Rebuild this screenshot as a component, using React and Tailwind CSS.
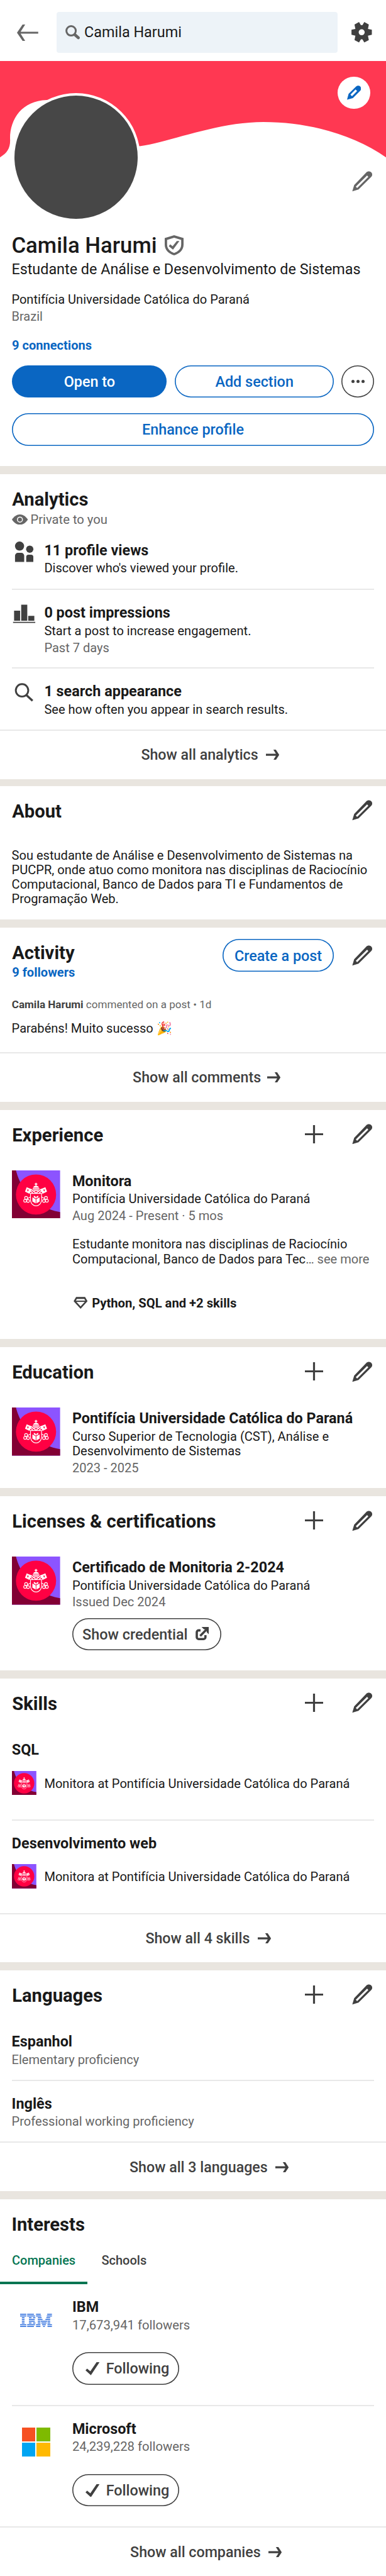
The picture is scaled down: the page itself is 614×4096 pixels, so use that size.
import React from "react";

const T16 = "block text-[23.4px] leading-[28px] whitespace-nowrap";
const T14 = "block text-[20.07px] leading-[24px] whitespace-nowrap";

function Pencil({ className = "text-[#404040]" }) {
  return (
    <svg viewBox="0 0 174 174" className={`h-[32.6px] w-[32.6px] shrink-0 ${className}`} fill="currentColor" fillRule="evenodd">
      <path d="M2 172L18 119L122 11C132 0 152 0 163 11C174 22 174 39 163 50L55 156ZM128 37L32 132L43 144L138 49Z" />
    </svg>
  );
}

function SmallPencil() {
  return (
    <svg viewBox="0 0 100 100" className="h-[22.6px] w-[22.6px] text-[#0a66c2]" fill="currentColor" fillRule="evenodd">
      <path d="M0 100L11 59L64 7C73 -2 86 -1 93 7C101 15 101 28 93 36L41 88ZM60 28L24 64L35 75L71 39Z" />
    </svg>
  );
}

function Plus() {
  return (
    <svg viewBox="0 0 29 29" className="h-[29px] w-[29px] shrink-0 text-[#404040]" fill="currentColor">
      <path d="M12.9 0H16.1V12.9H29V16.1H16.1V29H12.9V16.1H0V12.9H12.9Z" />
    </svg>
  );
}

function ArrowRight() {
  return (
    <svg viewBox="0 0 21.2 16.4" className="h-[16.4px] w-[21.2px] shrink-0" fill="currentColor">
      <path d="M11.8 0H15.8L21.2 8.2L15.8 16.4H11.8L15.9 9.8H0V6.6H15.9Z" />
    </svg>
  );
}

function Check() {
  return (
    <svg viewBox="0 0 22.4 20.8" className="h-[20.8px] w-[22.4px] shrink-0" fill="currentColor">
      <path d="M0 13L2.6 10.2L7.7 14.6L17.6 0H22.4L8.6 20.8Z" />
    </svg>
  );
}

function Crest({ className }) {
  const half = (
    <g>
      <path d="M124 141L166 158L148 197L110 179Z" fill="#fff" />
      <path d="M137 158L131 176M126 163L142 170" stroke="#ff0043" strokeWidth="5" />
      <path d="M158 158L204 192M154 172L176 190" stroke="#fff" strokeWidth="8" />
      <g fill="none" stroke="#fff" strokeWidth="6">
        <circle cx="119" cy="231" r="12" />
        <circle cx="111" cy="255" r="12" />
        <circle cx="136" cy="257" r="12" />
        <path d="M130 238L157 222" />
      </g>
      <path d="M172 226L200 242V278L172 262Z M184 212L201 222V236L184 226Z" fill="#fff" />
    </g>
  );
  return (
    <svg viewBox="0 0 405 405" className={`shrink-0 ${className}`}>
      <rect width="405" height="405" fill="#8c54ff" />
      <path d="M0 0H34C60 110 160 310 405 350V405H0Z" fill="#820034" />
      <circle cx="202.5" cy="203" r="169" fill="#ff0043" />
      {half}
      <g transform="matrix(-1 0 0 1 405 0)">{half}</g>
      <path d="M202.5 105V132M191 115H214" stroke="#fff" strokeWidth="8" />
      <path d="M188 131H217L229 146H176Z M174 151H231V161H174Z M184 166H221L228 174H177Z" fill="#fff" />
      <path d="M156 194H249V245C249 282 222 298 202.5 298C183 298 156 282 156 245Z" fill="none" stroke="#fff" strokeWidth="6" />
    </svg>
  );
}

const IBM_ROWS = [
  [[0, 194], [222, 433], [500, 648], [852, 1000]],
  [[0, 194], [222, 468], [500, 662], [838, 1000]],
  [[55, 139], [277, 361], [405, 480], [555, 676], [824, 945]],
  [[55, 139], [277, 460], [555, 705], [795, 945]],
  [[55, 139], [277, 460], [555, 639], [652, 848], [861, 945]],
  [[55, 139], [277, 361], [405, 480], [555, 639], [668, 832], [861, 945]],
  [[0, 194], [222, 468], [500, 639], [692, 808], [861, 1000]],
  [[0, 194], [222, 433], [500, 639], [722, 778], [861, 1000]],
];

function IbmLogo() {
  return (
    <svg viewBox="0 0 1000 415" className="h-[21px] w-[50.6px]" fill="#2a6bdc">
      {IBM_ROWS.map((row, i) => row.map(([a, b]) => <rect key={`${i}-${a}`} x={a} y={i * 55} width={b - a} height="30" />))}
    </svg>
  );
}

function MicrosoftLogo() {
  return (
    <span className="grid h-[46.2px] w-[45.8px] grid-cols-2 gap-[2px]">
      <span className="bg-[#f65022]" />
      <span className="bg-[#7eba00]" />
      <span className="bg-[#00a5f2]" />
      <span className="bg-[#ffb901]" />
    </span>
  );
}

function Band({ className = "h-[13px]" }) {
  return <div className={`shrink-0 bg-[#e9e5df] ${className}`} />;
}

function Divider({ className = "" }) {
  return <div className={`h-[2px] shrink-0 bg-[#e8e8e8] ${className}`} />;
}

function SectionHeader({ title, add }) {
  return (
    <header className="flex h-[77px] shrink-0 items-center pr-[21.8px] pl-[19.2px]">
      <h2 className="mt-[3px] flex-1 text-[29.2px] leading-[34px] font-bold">{title}</h2>
      {add && <Plus />}
      <span className="ml-[46px] flex"><Pencil /></span>
    </header>
  );
}

function ShowAll({ label, className }) {
  return (
    <a className="mt-auto block shrink-0 text-[#404040]">
      <Divider />
      <span className={`flex h-[76.6px] items-center ${className}`}>
        <span className="text-[23.22px] leading-[28px] font-medium whitespace-nowrap">{label}</span>
        <ArrowRight />
      </span>
    </a>
  );
}

function PillButton({ children, className }) {
  return <button className={`flex h-[51.8px] shrink-0 items-center rounded-full text-[23.4px] leading-[28px] font-medium whitespace-nowrap ${className}`}>{children}</button>;
}

const BLUE_OUTLINE = "text-[#0a66c2] shadow-[inset_0_0_0_1.6px_#0a66c2]";
const DARK_OUTLINE = "text-[#404040] shadow-[inset_0_0_0_1.6px_#404040]";

function TopBar() {
  return (
    <div className="flex h-[96.5px] shrink-0 items-start pt-[19.2px] pl-[27.4px]">
      <svg viewBox="0 0 33.8 26" className="mt-[19.4px] h-[26px] w-[33.8px] text-[#666]" fill="currentColor">
        <path d="M8.9 0H13.1L5.8 11.4H33.8V14.6H5.8L13.1 26H8.9L0 13Z" />
      </svg>
      <div className="ml-[28.5px] flex h-[64.4px] w-[447.6px] items-center rounded-[4px] bg-[#edf3f8] pl-[14.4px]">
        <svg viewBox="0 0 23.4 23" className="h-[23px] w-[23.4px] text-[#666]">
          <circle cx="9.1" cy="9.1" r="7.5" fill="none" stroke="currentColor" strokeWidth="3" />
          <path d="M15.2 15.2L20.6 20" fill="none" stroke="currentColor" strokeWidth="4.6" strokeLinecap="round" />
        </svg>
        <span className="ml-[6.6px] text-[23.4px] leading-[28px]">Camila Harumi</span>
      </div>
      <svg viewBox="-16.3 -16.3 32.6 32.6" className="mt-[16.1px] ml-[22.1px] h-[32.6px] w-[32.6px] text-[#404040]" fill="currentColor" fillRule="evenodd">
        <path d="M-4.2 -16.2L-1.2 -11.2H1.2L4.2 -16.2L11.4 -12.4L10 -5.4L16.2 -4V4L10 5.4L11.4 12.4L4.2 16.2L1.2 11.2H-1.2L-4.2 16.2L-11.4 12.4L-10 5.4L-16.2 4V-4L-10 -5.4L-11.4 -12.4ZM0 -4.8A4.8 4.8 0 1 0 0 4.8A4.8 4.8 0 1 0 0 -4.8Z" />
      </svg>
    </div>
  );
}

function Profile() {
  return (
    <section className="flex h-[740.7px] shrink-0 flex-col">
      <TopBar />
      <div className="relative h-[273.3px] shrink-0">
        <svg viewBox="0 0 614 154" className="block h-[154px] w-[614px]">
          <path d="M0 0H614V153.2C565 119 495 97 419 97C345 97 270 129 222 135.5L100 61.9H74.4C35 63 16 92 16 123C17 138 12 146 0 153.2Z" fill="#ff3852" />
        </svg>
        <div className="absolute top-[51px] left-[19.4px] h-[204px] w-[204px] rounded-full bg-white p-[4px]">
          <div className="h-full w-full rounded-full bg-[#474747]" />
        </div>
        <button className="absolute top-[25.7px] left-[537.4px] flex h-[51.2px] w-[51.2px] items-center justify-center rounded-full bg-white">
          <SmallPencil />
        </button>
        <span className="absolute top-[175.7px] left-[559.6px] flex"><Pencil className="text-[#666]" /></span>
      </div>
      <div className="flex flex-col pr-[19px] pl-[18.4px]">
        <div className="flex items-center">
          <h1 className="text-[34.8px] leading-[40px] font-medium whitespace-nowrap">Camila Harumi</h1>
          <svg viewBox="0 0 30 32" className="ml-[12.5px] h-[32px] w-[30px] text-[#666]" fill="currentColor" fillRule="evenodd">
            <path d="M15 0L30 4.6V15C30 24 23 29.6 15 32C7 29.6 0 24 0 15V4.6ZM15 4L3.8 7.4V15C3.8 21.8 8.8 26 15 28.2C21.2 26 26.2 21.8 26.2 15V7.4Z" />
            <path d="M6.4 17.4L8.8 14.4L12.6 17.6L19.2 9.2H23.4L13.2 22.9Z" />
          </svg>
        </div>
        <p className="mt-[4.4px] text-[23.36px] leading-[28px] whitespace-nowrap">Estudante de Análise e Desenvolvimento de Sistemas</p>
        <p className={`mt-[22.3px] ${T14}`}>Pontifícia Universidade Católica do Paraná</p>
        <p className={`mt-[2.7px] text-[#666] ${T14}`}>Brazil</p>
        <p className={`mt-[21.8px] ml-[0.6px] font-bold text-[#0a66c2] ${T14}`}>9 connections</p>
      </div>
      <div className="mt-[19.6px] flex pl-[19.2px]">
        <PillButton className="w-[246.3px] justify-center bg-[#0a66c2] pt-[1px] text-white">Open to</PillButton>
        <PillButton className={`ml-[12.9px] w-[252.6px] justify-center pt-[1px] ${BLUE_OUTLINE}`}>Add section</PillButton>
        <PillButton className={`ml-[12.5px] w-[51.8px] justify-center gap-[3.2px] ${DARK_OUTLINE}`}>
          <span className="h-[5px] w-[5px] rounded-full bg-[#404040]" />
          <span className="h-[5px] w-[5px] rounded-full bg-[#404040]" />
          <span className="h-[5px] w-[5px] rounded-full bg-[#404040]" />
        </PillButton>
      </div>
      <div className="mt-[24.7px] pr-[19.2px] pl-[19.2px]">
        <PillButton className={`w-full justify-center pt-[1px] ${BLUE_OUTLINE}`}>Enhance profile</PillButton>
      </div>
    </section>
  );
}

function Stat({ icon, title, text, note }) {
  return (
    <div className="flex pl-[19.2px]">
      <svg viewBox="0 0 38 34" className="h-[34px] w-[38px] shrink-0 text-[#404040]" fill="currentColor">{icon}</svg>
      <div className="ml-[13.2px]">
        <h3 className={`font-bold ${T16}`}>{title}</h3>
        <p className={`mt-[2.7px] ${T14}`}>{text}</p>
        {note && <p className={`mt-[3px] text-[#666] ${T14}`}>{note}</p>}
      </div>
    </div>
  );
}

function Analytics() {
  return (
    <section className="flex h-[484.9px] shrink-0 flex-col">
      <h2 className="mt-[23px] ml-[19.2px] text-[29.2px] leading-[34px] font-bold">Analytics</h2>
      <div className="mt-[2.9px] flex items-center pl-[18.9px] text-[#666]">
        <svg viewBox="0 0 25.4 16.4" className="mt-[1px] h-[16.4px] w-[25.4px]" fill="currentColor">
          <path d="M0 8.2C3.4 3 7.8 0 12.7 0S22 3 25.4 8.2C22 13.4 17.6 16.4 12.7 16.4S3.4 13.4 0 8.2Z" />
          <circle cx="12.7" cy="8.2" r="4" fill="none" stroke="#fff" strokeWidth="1.5" />
        </svg>
        <span className="ml-[4.2px] text-[20.2px] leading-[24px]">Private to you</span>
      </div>
      <div className="mt-[23.2px]">
        <Stat
          title="11 profile views"
          text="Discover who's viewed your profile."
          icon={
            <>
              <circle cx="12.1" cy="7.3" r="7.25" />
              <circle cx="28.3" cy="12.2" r="5.8" />
              <path d="M4.9 32.4V22.6A4.5 4.5 0 0 1 9.4 18.1H15A4.5 4.5 0 0 1 19.5 22.6V32.4ZM22.7 32.4V24.5A3.6 3.6 0 0 1 26.3 20.9H30.4A3.6 3.6 0 0 1 34 24.5V32.4Z" />
            </>
          }
        />
      </div>
      <Divider className="mt-[20.1px] mr-[18.8px] ml-[19.2px]" />
      <div className="mt-[22.3px]">
        <Stat
          title="0 post impressions"
          text="Start a post to increase engagement."
          note="Past 7 days"
          icon={<path d="M1.8 28.7H37.1V30.6H1.8ZM3.4 11H13V27.1H3.4ZM14.7 1.4H24.4V27.1H14.7ZM25.9 19.2H35.6V27.1H25.9Z" />}
        />
      </div>
      <Divider className="mt-[19.6px] mr-[18.8px] ml-[19.2px]" />
      <div className="mt-[22px]">
        <Stat
          title="1 search appearance"
          text="See how often you appear in search results."
          icon={
            <g fill="none" stroke="currentColor">
              <circle cx="16.05" cy="12.7" r="9.9" strokeWidth="2.9" />
              <path d="M23 20.2L32.8 29.2" strokeWidth="3.4" />
            </g>
          }
        />
      </div>
      <ShowAll label="Show all analytics" className="gap-[12.6px] pl-[224.4px]" />
    </section>
  );
}

function About() {
  return (
    <section className="flex h-[212px] shrink-0 flex-col">
      <SectionHeader title="About" />
      <p className="mt-[22px] pl-[18.6px] text-[20.07px] leading-[23.2px] whitespace-nowrap">
        Sou estudante de Análise e Desenvolvimento de Sistemas na
        <br />
        PUCPR, onde atuo como monitora nas disciplinas de Raciocínio
        <br />
        Computacional, Banco de Dados para TI e Fundamentos de
        <br />
        Programação Web.
      </p>
    </section>
  );
}

function Activity() {
  return (
    <section className="flex h-[276.7px] shrink-0 flex-col">
      <header className="flex items-start pr-[21.8px] pl-[19.2px]">
        <div className="flex-1 pt-[23px]">
          <h2 className="text-[29.2px] leading-[34px] font-bold">Activity</h2>
          <p className={`mt-[2.6px] font-bold text-[#0a66c2] ${T14}`}>9 followers</p>
        </div>
        <div className="flex items-center pt-[18.6px]">
          <PillButton className={`w-[176.6px] justify-center pt-[1px] ${BLUE_OUTLINE}`}>Create a post</PillButton>
          <span className="ml-[28.8px] flex"><Pencil /></span>
        </div>
      </header>
      <p className="mt-[28.2px] pl-[18.8px] text-[17.07px] leading-[20px] text-[#666]">
        <b className="font-bold text-[#404040]">Camila Harumi</b> commented on a post • 1d
      </p>
      <p className={`mt-[16.3px] h-[24px] pl-[18.6px] ${T14}`}>Parabéns! Muito sucesso 🎉</p>
      <ShowAll label="Show all comments" className="gap-[9.5px] pl-[211.1px]" />
    </section>
  );
}

function Entry({ logo, title, children }) {
  return (
    <div className="flex pl-[19.2px]">
      <div className="flex h-[76.6px] w-[76.6px] shrink-0 items-center justify-center">{logo}</div>
      <div className="ml-[19.1px] pt-[3px]">
        <h3 className={`font-bold ${T16}`}>{title}</h3>
        {children}
      </div>
    </div>
  );
}

const BIG_CREST = <Crest className="h-[76.6px] w-[76.6px]" />;

function Experience() {
  return (
    <section className="flex h-[364.8px] shrink-0 flex-col">
      <SectionHeader title="Experience" add />
      <div className="mt-[19px]">
        <Entry logo={BIG_CREST} title="Monitora">
          <p className={`mt-[2.8px] ${T14}`}>Pontifícia Universidade Católica do Paraná</p>
          <p className={`mt-[2.9px] text-[#666] ${T14}`}>Aug 2024 - Present · 5 mos</p>
          <p className="mt-[22.1px] text-[20.07px] leading-[23.2px] whitespace-nowrap">
            Estudante monitora nas disciplinas de Raciocínio
            <br />
            Computacional, Banco de Dados para Tec<span className="text-[#666]">… see more</span>
          </p>
          <div className="mt-[46px] flex items-center">
            <svg viewBox="0 0 22.4 19.4" className="-mt-[1px] ml-[2px] h-[19.4px] w-[22.4px] text-[#404040]" fill="none" stroke="currentColor" strokeWidth="2.6">
              <path d="M4.8 1.5H17.6L20.7 6.8L11.2 17.2L1.7 6.8Z" />
              <path d="M4 2.2H18.4" strokeWidth="2.4" />
              <path d="M2.4 7.1H20" strokeWidth="2" />
            </svg>
            <span className="ml-[6.9px] text-[20.2px] leading-[24px] font-bold whitespace-nowrap">Python, SQL and +2 skills</span>
          </div>
        </Entry>
      </div>
    </section>
  );
}

function Education() {
  return (
    <section className="flex h-[223.9px] shrink-0 flex-col">
      <SectionHeader title="Education" add />
      <div className="mt-[19px]">
        <Entry logo={BIG_CREST} title={<span className="text-[23.33px]">Pontifícia Universidade Católica do Paraná</span>}>
          <p className="mt-[3.4px] text-[20.07px] leading-[23.2px] whitespace-nowrap">
            Curso Superior de Tecnologia (CST), Análise e
            <br />
            Desenvolvimento de Sistemas
          </p>
          <p className={`mt-[2.4px] text-[#666] ${T14}`}>2023 - 2025</p>
        </Entry>
      </div>
    </section>
  );
}

function Licenses() {
  return (
    <section className="flex h-[276.5px] shrink-0 flex-col">
      <SectionHeader title="Licenses & certifications" add />
      <div className="mt-[18.7px]">
        <Entry logo={BIG_CREST} title="Certificado de Monitoria 2-2024">
          <p className={`mt-[2.7px] ${T14}`}>Pontifícia Universidade Católica do Paraná</p>
          <p className={`mt-[2.6px] text-[#666] ${T14}`}>Issued Dec 2024</p>
          <PillButton className={`mt-[13.2px] ml-[0.6px] w-[236.5px] pt-[1px] pl-[15.6px] ${DARK_OUTLINE}`}>
            Show credential
            <svg viewBox="0 0 21.6 21.2" className="-mt-[3px] ml-[12px] h-[21.2px] w-[21.6px]" fill="none" stroke="currentColor">
              <path d="M8 5.4H5A3 3 0 0 0 2 8.4V16.2A3 3 0 0 0 5 19.2H12.8A3 3 0 0 0 15.8 16.2V13" strokeWidth="3.6" />
              <path d="M7.4 14.2L18 3.6" strokeWidth="3.6" />
              <path d="M9.6 0H21.6V12L17.8 8.2V3.8H13.4Z" fill="currentColor" stroke="none" />
            </svg>
          </PillButton>
        </Entry>
      </div>
    </section>
  );
}

function Skill({ name }) {
  return (
    <div className="pl-[19.2px]">
      <h3 className={`-ml-[0.4px] font-bold ${T16}`}>{name}</h3>
      <div className="mt-[19.5px] flex items-center">
        <Crest className="h-[38.8px] w-[38.8px]" />
        <span className={`mt-[1px] ml-[12.4px] ${T14}`}>Monitora at Pontifícia Universidade Católica do Paraná</span>
      </div>
    </div>
  );
}

function Skills() {
  return (
    <section className="flex h-[451.4px] shrink-0 flex-col">
      <SectionHeader title="Skills" add />
      <div className="mt-[22.3px]"><Skill name="SQL" /></div>
      <Divider className="mt-[38.4px] mr-[18.8px] ml-[19.2px]" />
      <div className="mt-[22px]"><Skill name="Desenvolvimento web" /></div>
      <ShowAll label="Show all 4 skills" className="gap-[12.6px] pl-[231.4px]" />
    </section>
  );
}

function Language({ name, level }) {
  return (
    <div className="pl-[18.6px]">
      <h3 className={`font-bold ${T16}`}>{name}</h3>
      <p className={`mt-[2.7px] text-[#666] ${T14}`}>{level}</p>
    </div>
  );
}

function Languages() {
  return (
    <section className="flex h-[350.8px] shrink-0 flex-col">
      <SectionHeader title="Languages" add />
      <div className="mt-[22px]"><Language name="Espanhol" level="Elementary proficiency" /></div>
      <Divider className="mt-[20.1px] mr-[18.8px] ml-[19.2px]" />
      <div className="mt-[21.7px]"><Language name="Inglês" level="Professional working proficiency" /></div>
      <ShowAll label="Show all 3 languages" className="gap-[12.6px] pl-[206px]" />
    </section>
  );
}

function Company({ logo, name, followers }) {
  return (
    <Entry logo={logo} title={name}>
      <p className="mt-[2.8px] text-[20.28px] leading-[24px] text-[#666]">{followers} followers</p>
      <PillButton className={`mt-[31.3px] ml-[0.6px] w-[169.2px] pt-[1px] pl-[20.4px] ${DARK_OUTLINE}`}>
        <Check />
        <span className="ml-[10.4px]">Following</span>
      </PillButton>
    </Entry>
  );
}

function Interests() {
  return (
    <section className="flex h-[598.8px] shrink-0 flex-col">
      <h2 className="mt-[23px] ml-[18.4px] text-[29.2px] leading-[34px] font-bold">Interests</h2>
      <div className="mt-[27.6px] flex text-[20.03px] leading-[24px] font-medium">
        <div className="text-[#057552]">
          <div className="pl-[19px]">Companies</div>
          <div className="mt-[22.5px] h-[3.5px] w-[139.4px] bg-[#057552]" />
        </div>
        <div className="pl-[22px] text-[#404040]">Schools</div>
      </div>
      <div className="mt-[19.2px]"><Company logo={<IbmLogo />} name="IBM" followers="17,673,941" /></div>
      <Divider className="mt-[32px] mr-[18.8px] ml-[19.2px]" />
      <div className="mt-[18.7px]"><Company logo={<MicrosoftLogo />} name="Microsoft" followers="24,239,228" /></div>
      <ShowAll label="Show all companies" className="gap-[12.2px] pl-[207.1px]" />
    </section>
  );
}

export default function App() {
  return (
    <main className="flex h-[4096px] w-[614px] flex-col overflow-hidden bg-white font-[Roboto,sans-serif] text-[#191919]">
      <Profile />
      <Band />
      <Analytics />
      <Band className="h-[11.3px]" />
      <About />
      <Band />
      <Activity />
      <Band />
      <Experience />
      <Band />
      <Education />
      <Band className="h-[13.1px]" />
      <Licenses />
      <Band />
      <Skills />
      <Band />
      <Languages />
      <Band className="h-[13.2px]" />
      <Interests />
    </main>
  );
}
